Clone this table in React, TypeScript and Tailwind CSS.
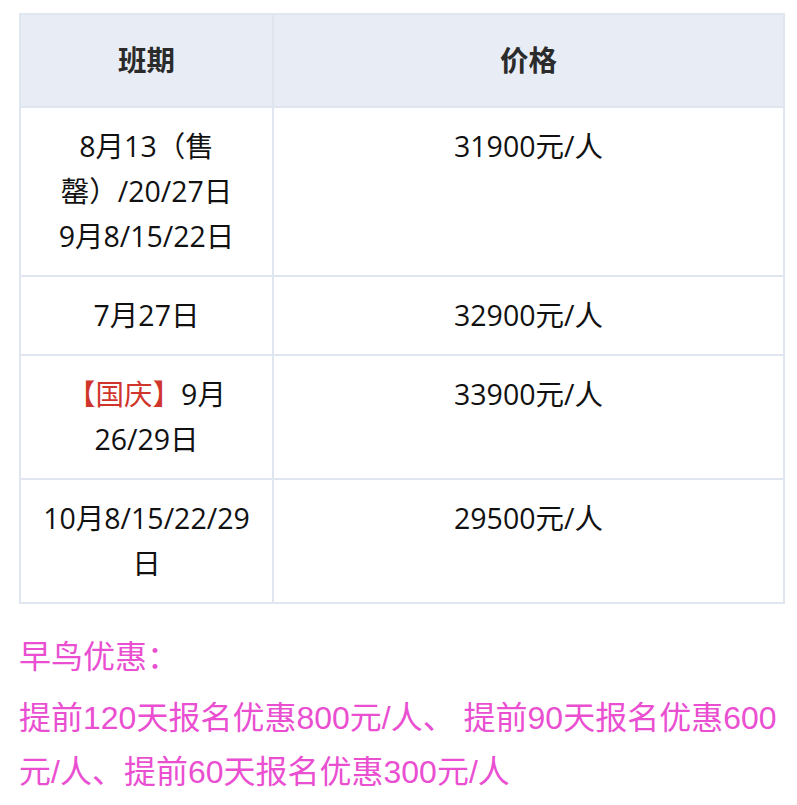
import React from "react";

const rows: { date: React.ReactNode; price: string }[] = [
  {
    date: (
      <>
        8月13（售
        <br />
        罄）/20/27日
        <br />
        9月8/15/22日
      </>
    ),
    price: "31900元/人",
  },
  { date: "7月27日", price: "32900元/人" },
  {
    date: (
      <>
        <span className="text-[#d0352b]">【国庆】</span>9月
        <br />
        26/29日
      </>
    ),
    price: "33900元/人",
  },
  {
    date: (
      <>
        10月8/15/22/29
        <br />日
      </>
    ),
    price: "29500元/人",
  },
];

export default function App() {
  return (
    <div className="min-h-[805px] w-[797px] bg-white pt-[13px] font-['Open_Sans','Noto_Sans_CJK_SC',sans-serif]">
      <table className="ml-[19px] w-[766px] border-collapse border-2 border-[#dfe6ef] text-[28.5px] leading-[45px] text-[#111]">
        <thead>
          <tr className="bg-[#e8edf5]">
            <th className="w-[253px] border-2 border-[#dfe6ef] py-[23px] text-center font-bold text-[#2b2b2b]">班期</th>
            <th className="border-2 border-[#dfe6ef] py-[23px] text-center font-bold text-[#2b2b2b]">价格</th>
          </tr>
        </thead>
        <tbody>
          {rows.map((r) => (
            <tr key={r.price}>
              <td className="whitespace-nowrap border-2 border-[#dfe6ef] px-4 py-4 text-center align-top">{r.date}</td>
              <td className="border-2 border-[#dfe6ef] px-4 py-4 text-center align-top">{r.price}</td>
            </tr>
          ))}
        </tbody>
      </table>

      <div className="pl-[19px] pr-[6px] font-['Liberation_Sans','Noto_Sans_CJK_SC',sans-serif] text-[32px] leading-[54px] text-[#ea4fd1]">
        <p className="mt-[26px]">早鸟优惠：</p>
        <p className="mt-[7px]">
          提前120天报名优惠800元/人、 提前90天报名优惠600元/人、提前60天报名优惠300元/人
        </p>
      </div>
    </div>
  );
}
